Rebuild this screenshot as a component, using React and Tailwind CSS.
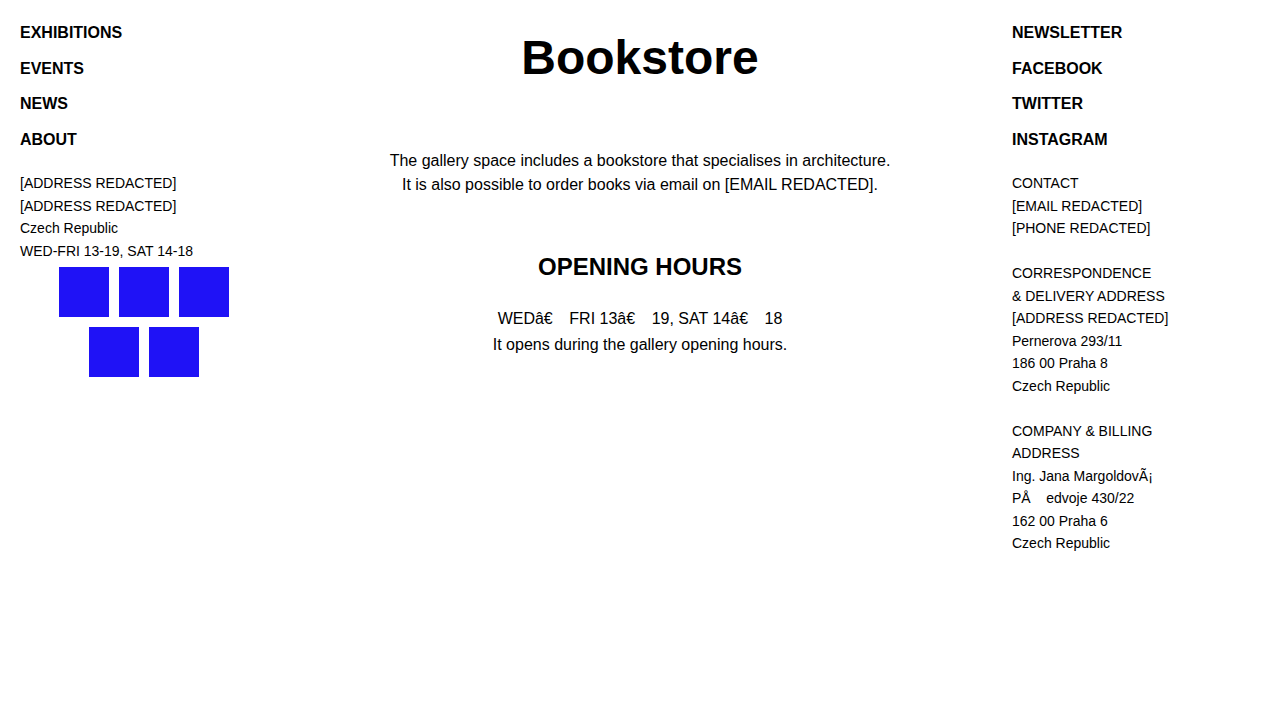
export default function App() {
  const font = { fontFamily: '"Liberation Sans", Arial, Helvetica, sans-serif' };
  const navL = ["EXHIBITIONS", "EVENTS", "NEWS", "ABOUT"];
  const navR = ["NEWSLETTER", "FACEBOOK", "TWITTER", "INSTAGRAM"];
  const Box = () => <div className="w-[50px] h-[50px] bg-[#1f12f6]" />;
  const gap = "   \u2009";
  return (
    <div className="flex min-h-[720px] w-full bg-white text-black" style={font}>
      <div className="w-[288px] shrink-0 px-5 pt-[24px]">
        <nav className="flex flex-col gap-[17.5px]">
          {navL.map((t) => (
            <a key={t} className="block text-base font-bold leading-[18px]">{t}</a>
          ))}
        </nav>
        <div className="mt-[23.5px] text-sm leading-[22.5px]">
          [ADDRESS REDACTED]<br />
          [ADDRESS REDACTED]<br />
          Czech Republic<br />
          WED-FRI 13-19, SAT 14-18
        </div>
        <div className="mt-[5px] flex flex-col items-center gap-[10px]">
          <div className="flex gap-[10px]"><Box /><Box /><Box /></div>
          <div className="flex gap-[10px]"><Box /><Box /></div>
        </div>
      </div>
      <main className="flex-1 text-center pt-[34px]">
        <h1 className="text-5xl font-bold leading-[48px]">Bookstore</h1>
        <p className="mt-[67px] text-base leading-[24px]">
          The gallery space includes a bookstore that specialises in architecture.<br />
          It is also possible to order books via email on [EMAIL REDACTED].
        </p>
        <h2 className="mt-[56px] text-2xl font-bold leading-[28px]">OPENING HOURS</h2>
        <p className="mt-[25px] text-base leading-[26px] whitespace-pre">
          {`WEDâ€${gap}FRI 13â€${gap}19, SAT 14â€${gap}18`}<br />
          {"It opens during the gallery opening hours."}
        </p>
      </main>
      <div className="w-[288px] shrink-0 px-5 pt-[24px]">
        <nav className="flex flex-col gap-[17.5px]">
          {navR.map((t) => (
            <a key={t} className="block text-base font-bold leading-[18px]">{t}</a>
          ))}
        </nav>
        <div className="mt-[23.5px] text-sm leading-[22.5px] whitespace-pre-line">
          {`CONTACT
[EMAIL REDACTED]
[PHONE REDACTED]
\u00a0
CORRESPONDENCE
& DELIVERY ADDRESS
[ADDRESS REDACTED]
Pernerova 293/11
186 00 Praha 8
Czech Republic
\u00a0
COMPANY & BILLING
ADDRESS
Ing. Jana MargoldovÃ¡
`}
          <span className="whitespace-pre">{"PÅ    edvoje 430/22"}</span>
          {`
162 00 Praha 6
Czech Republic`}
        </div>
      </div>
    </div>
  );
}
